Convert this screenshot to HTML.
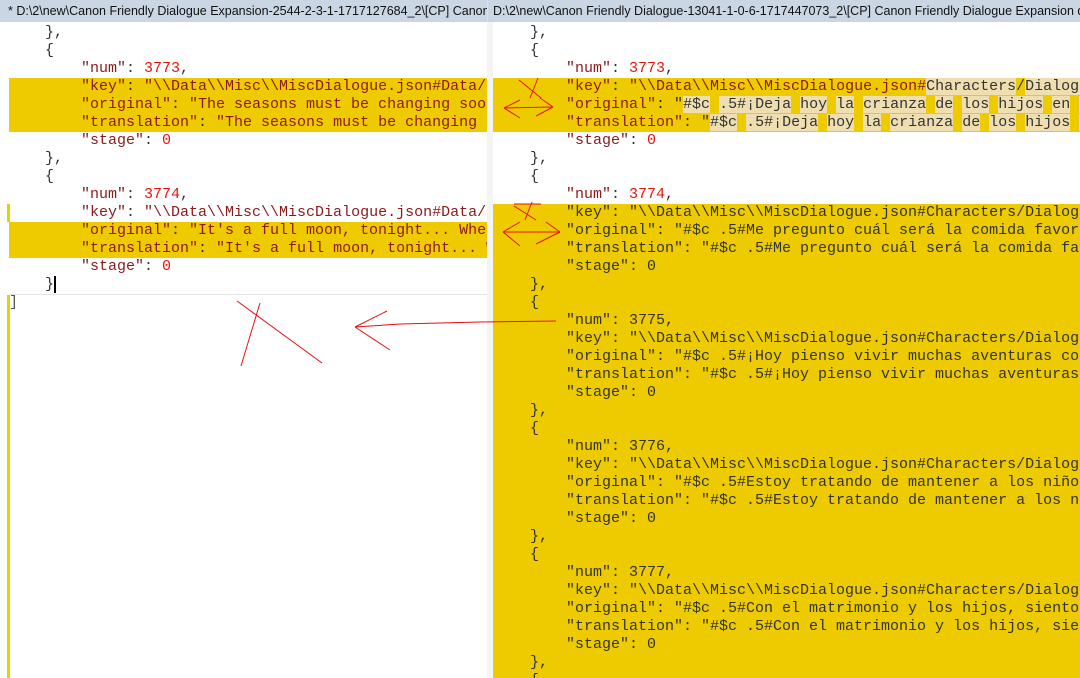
<!DOCTYPE html>
<html><head><meta charset="utf-8"><style>
body{margin:0;width:1080px;height:678px;overflow:hidden;background:#fff;position:relative;}
.hdr{position:absolute;top:0;height:22px;background:#cbd6e4;font:12.5px/22px "Liberation Sans",sans-serif;color:#111;white-space:nowrap;overflow:hidden;}
.pane{position:absolute;top:22px;bottom:0;overflow:hidden;background:#fff}
.l{position:absolute;left:0;right:0;height:18px;line-height:18px;font-family:"Liberation Mono","Courier New",monospace;font-size:15px;white-space:pre;color:#333;}
.y{background:#eecb00}
.k{color:#8b1a1a}.n{color:#e8140c}
.w{background:#efdfb0}
</style></head><body>
<div class="hdr" style="left:0;width:487px;padding-left:8px;box-sizing:border-box">* D:\2\new\Canon Friendly Dialogue Expansion-2544-2-3-1-1717127684_2\[CP] Canon Friendly Dialogue</div>
<div class="hdr" style="left:487px;width:593px;padding-left:5px;box-sizing:border-box;border-left:1px solid #e0e0e0">D:\2\new\Canon Friendly Dialogue-13041-1-0-6-1717447073_2\[CP] Canon Friendly Dialogue Expansion dict\C</div>

<div class="pane" style="left:0;width:487px">
<div style="position:absolute;left:7px;top:273px;width:3px;height:400px;background:#e2d400"></div>
<div style="position:absolute;left:7px;top:182px;width:3px;height:18px;background:#e2d400"></div>
<div style="position:absolute;left:9px;right:0;top:0;height:272px">
<div class="l" style="top:2px;padding-left:36px">},</div>
<div class="l" style="top:20px;padding-left:36px">{</div>
<div class="l" style="top:38px;padding-left:72px"><span class="k">"num"</span>: <span class="n">3773</span>,</div>
<div class="l y" style="top:56px;padding-left:72px"><span class="k">"key"</span>: <span class="k">"\\Data\\Misc\\MiscDialogue.json#Data/Misc</span></div>
<div class="l y" style="top:74px;padding-left:72px"><span class="k">"original"</span>: <span class="k">"The seasons must be changing soon</span></div>
<div class="l y" style="top:92px;padding-left:72px"><span class="k">"translation"</span>: <span class="k">"The seasons must be changing soon</span></div>
<div class="l" style="top:110px;padding-left:72px"><span class="k">"stage"</span>: <span class="n">0</span></div>
<div class="l" style="top:128px;padding-left:36px">},</div>
<div class="l" style="top:146px;padding-left:36px">{</div>
<div class="l" style="top:164px;padding-left:72px"><span class="k">"num"</span>: <span class="n">3774</span>,</div>
<div class="l" style="top:182px;padding-left:72px"><span class="k">"key"</span>: <span class="k">"\\Data\\Misc\\MiscDialogue.json#Data/Misc</span></div>
<div class="l y" style="top:200px;padding-left:72px"><span class="k">"original"</span>: <span class="k">"It's a full moon, tonight... When</span></div>
<div class="l y" style="top:218px;padding-left:72px"><span class="k">"translation"</span>: <span class="k">"It's a full moon, tonight... When</span></div>
<div class="l" style="top:236px;padding-left:72px"><span class="k">"stage"</span>: <span class="n">0</span></div>
<div class="l" style="top:254px;padding-left:36px">}<span style="display:inline-block;width:2px;height:17px;background:#000;vertical-align:top"></span></div>
</div>
<div style="position:absolute;left:9px;right:0;top:272px;height:1px;background:#e4e4e4"></div>
<div class="l" style="top:272px;left:9px;color:#555">]</div>
</div>

<div class="pane" style="left:487px;width:593px;background:#f4f4f4">
<div style="position:absolute;left:6px;right:0;top:0;bottom:0;background:#fff"></div>
<div style="position:absolute;left:6px;right:0;top:182px;bottom:0;background:#eecb00"></div>
<div style="position:absolute;left:6px;right:0;top:0;bottom:0">
<div class="l" style="top:2px;padding-left:37px">},</div>
<div class="l" style="top:20px;padding-left:37px">{</div>
<div class="l" style="top:38px;padding-left:73px"><span class="k">"num"</span>: <span class="n">3773</span>,</div>
<div class="l y" style="top:56px;padding-left:73px"><span class="k">"key"</span>: <span class="k">"\\Data\\Misc\\MiscDialogue.json#</span><span class="w">Characters</span>/<span class="w">Dialogue</span></div>
<div class="l y" style="top:74px;padding-left:73px"><span class="k">"original"</span>: "<span class="w">#$c</span> <span class="w">.5#¡Deja</span> <span class="w">hoy</span> <span class="w">la</span> <span class="w">crianza</span> <span class="w">de</span> <span class="w">los</span> <span class="w">hijos</span> <span class="w">en</span> <span class="w">manos</span></div>
<div class="l y" style="top:92px;padding-left:73px"><span class="k">"translation"</span>: "<span class="w">#$c</span> <span class="w">.5#¡Deja</span> <span class="w">hoy</span> <span class="w">la</span> <span class="w">crianza</span> <span class="w">de</span> <span class="w">los</span> <span class="w">hijos</span> <span class="w">en</span></div>
<div class="l" style="top:110px;padding-left:73px"><span class="k">"stage"</span>: <span class="n">0</span></div>
<div class="l" style="top:128px;padding-left:37px">},</div>
<div class="l" style="top:146px;padding-left:37px">{</div>
<div class="l" style="top:164px;padding-left:73px"><span class="k">"num"</span>: <span class="n">3774</span>,</div>
<div class="l" style="top:182px;padding-left:73px">"key": "\\Data\\Misc\\MiscDialogue.json#Characters/Dialogue</div>
<div class="l" style="top:200px;padding-left:73px">"original": "#$c .5#Me pregunto cuál será la comida favorita</div>
<div class="l" style="top:218px;padding-left:73px">"translation": "#$c .5#Me pregunto cuál será la comida favorita</div>
<div class="l" style="top:236px;padding-left:73px">"stage": 0</div>
<div class="l" style="top:254px;padding-left:37px">},</div>
<div class="l" style="top:272px;padding-left:37px">{</div>
<div class="l" style="top:290px;padding-left:73px">"num": 3775,</div>
<div class="l" style="top:308px;padding-left:73px">"key": "\\Data\\Misc\\MiscDialogue.json#Characters/Dialogue</div>
<div class="l" style="top:326px;padding-left:73px">"original": "#$c .5#¡Hoy pienso vivir muchas aventuras con</div>
<div class="l" style="top:344px;padding-left:73px">"translation": "#$c .5#¡Hoy pienso vivir muchas aventuras con</div>
<div class="l" style="top:362px;padding-left:73px">"stage": 0</div>
<div class="l" style="top:380px;padding-left:37px">},</div>
<div class="l" style="top:398px;padding-left:37px">{</div>
<div class="l" style="top:416px;padding-left:73px">"num": 3776,</div>
<div class="l" style="top:434px;padding-left:73px">"key": "\\Data\\Misc\\MiscDialogue.json#Characters/Dialogue</div>
<div class="l" style="top:452px;padding-left:73px">"original": "#$c .5#Estoy tratando de mantener a los niños</div>
<div class="l" style="top:470px;padding-left:73px">"translation": "#$c .5#Estoy tratando de mantener a los niños</div>
<div class="l" style="top:488px;padding-left:73px">"stage": 0</div>
<div class="l" style="top:506px;padding-left:37px">},</div>
<div class="l" style="top:524px;padding-left:37px">{</div>
<div class="l" style="top:542px;padding-left:73px">"num": 3777,</div>
<div class="l" style="top:560px;padding-left:73px">"key": "\\Data\\Misc\\MiscDialogue.json#Characters/Dialogue</div>
<div class="l" style="top:578px;padding-left:73px">"original": "#$c .5#Con el matrimonio y los hijos, siento</div>
<div class="l" style="top:596px;padding-left:73px">"translation": "#$c .5#Con el matrimonio y los hijos, siento</div>
<div class="l" style="top:614px;padding-left:73px">"stage": 0</div>
<div class="l" style="top:632px;padding-left:37px">},</div>
<div class="l" style="top:650px;padding-left:37px">{</div>
</div>
</div>

<svg style="position:absolute;left:0;top:0" width="1080" height="678" fill="none" stroke="#e81010" stroke-width="1">
<path d="M519 80 L541 98 M538 78 L530 98"/>
<path d="M504 108 L553 107 M504 108 L520 100 M504 108 L520 118 M553 107 L536 116 M553 107 L540 98"/>
<path d="M514 206 L536 220 M532 202 L525 220 M514 204 L541 204"/>
<path d="M503 232 L560 232 M503 232 L520 222 M503 232 L520 246 M560 232 L536 244 M560 232 L546 222"/>
<path d="M556 321 L480 322 L400 324 L355 327 M355 327 L387 311 M355 327 L390 350"/>
<path d="M237 301 L322 363 M260 303 L241 366"/>
</svg>
</body></html>
